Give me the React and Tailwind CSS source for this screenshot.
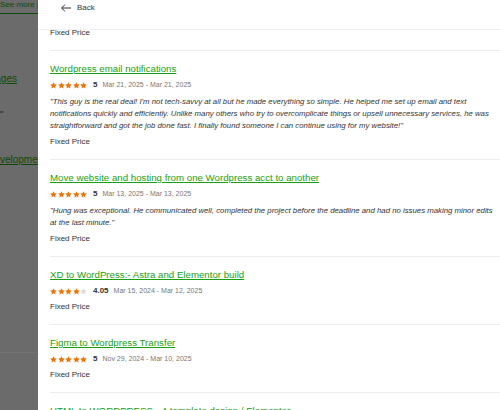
const reviews = [
  {
    title: "Wordpress email notifications",
    rating: 5,
    score: "5",
    dates: "Mar 21, 2025 - Mar 21, 2025",
    text: "\"This guy is the real deal! I'm not tech-savvy at all but he made everything so simple. He helped me set up email and text notifications quickly and efficiently. Unlike many others who try to overcomplicate things or upsell unnecessary services, he was straightforward and got the job done fast. I finally found someone I can continue using for my website!\"",
  },
  {
    title: "Move website and hosting from one Wordpress acct to another",
    rating: 5,
    score: "5",
    dates: "Mar 13, 2025 - Mar 13, 2025",
    text: "\"Hung was exceptional. He communicated well, completed the project before the deadline and had no issues making minor edits at the last minute.\"",
  },
  {
    title: "XD to WordPress:- Astra and Elementor build",
    rating: 4,
    score: "4.05",
    dates: "Mar 15, 2024 - Mar 12, 2025",
  },
  {
    title: "Figma to Wordpress Transfer",
    rating: 5,
    score: "5",
    dates: "Nov 29, 2024 - Mar 10, 2025",
  },
  {
    title: "HTML to WORDPRESS - 4 template design / Elementor",
    rating: 5,
    score: "5",
    dates: "Oct 02, 2024 - Oct 20, 2024",
  },
];

function Star({ filled }) {
  return (
    <svg width="7" height="7" viewBox="0 0 24 24" className={filled ? "fill-[#e8760a]" : "fill-[#dcdcdc]"}>
      <path d="M12 0.5l3.5 7.1 7.9 1.1-5.7 5.5 1.4 7.8L12 18.3l-7.1 3.7 1.4-7.8L0.6 8.7l7.9-1.1z" />
    </svg>
  );
}

function ReviewItem({ item }) {
  return (
    <div className="border-b border-[#ececec] pt-[11px] pb-[11px]">
      <a href="#" className="block h-[14px] leading-[14px] text-[9.7px] text-[#1a9f10] underline underline-offset-[1px] whitespace-nowrap">
        {item.title}
      </a>
      <div className="mt-[4px] flex h-[10px] items-center">
        <div className="flex gap-[0.5px]">
          {[1, 2, 3, 4, 5].map((n) => (
            <Star key={n} filled={n <= item.rating} />
          ))}
        </div>
        <span className="ml-[6px] text-[8px] font-semibold text-[#333]">{item.score}</span>
        <span className="ml-[5px] text-[7px] text-[#777]">{item.dates}</span>
      </div>
      {item.text && (
        <p className="mt-[6px] w-[450px] text-[7.8px] italic leading-[12px] text-[#333]">{item.text}</p>
      )}
      <div className={`${item.text ? "mt-[4px]" : "mt-[5px]"} h-[12px] leading-[12px] text-[8px] text-[#333]`}>
        Fixed Price
      </div>
    </div>
  );
}

export default function App() {
  return (
    <div className="flex h-[410px] w-[500px] overflow-hidden bg-white font-['Liberation_Sans',Arial,sans-serif]">
      {/* page behind the drawer, dimmed */}
      <div className="relative w-[38px] flex-none overflow-hidden bg-[#6b6b6b]">
        <div className="h-[15px] border-b border-[#0d4a05]">
          <div className="-mt-[1px] whitespace-nowrap text-[8px] leading-[12px] text-[#0d4a05]">See more projects</div>
        </div>
        <div className="mt-[59px] flex justify-end pr-[21px]">
          <span className="whitespace-nowrap text-[10px] leading-[12px] text-[#0d4a05] underline">Landing Pages</span>
        </div>
        <div className="mt-[24px] text-[9px] leading-[10px] text-[#1e1e1e]">"</div>
        <div className="mt-[35px] -ml-[36px] whitespace-nowrap text-[10px] leading-[12px] text-[#0d4a05] underline">
          Web Development
        </div>
        <div className="absolute left-0 right-0 top-[352px] border-t border-[#737373]" />
      </div>

      {/* drawer */}
      <div className="flex w-[484px] flex-none flex-col bg-white">
        <div className="h-[30px] flex-none border-b border-[#f0f0f0]">
          <div className="flex h-[16px] items-center pl-[23px]">
            <svg width="10" height="8" viewBox="0 0 10 8" fill="none" stroke="#333" strokeWidth="1">
              <path d="M4 0.5L0.7 4L4 7.5M0.7 4H10" />
            </svg>
            <span className="ml-[6px] text-[8px] text-[#333]">Back</span>
          </div>
        </div>
        <div className="flex-1 overflow-hidden pl-[12px]">
          <div className="border-b border-[#ececec] pb-[11px]">
            <div className="-mt-[3px] h-[12px] leading-[12px] text-[8px] text-[#333]">Fixed Price</div>
          </div>
          {reviews.map((item) => (
            <ReviewItem key={item.title} item={item} />
          ))}
        </div>
      </div>
    </div>
  );
}
